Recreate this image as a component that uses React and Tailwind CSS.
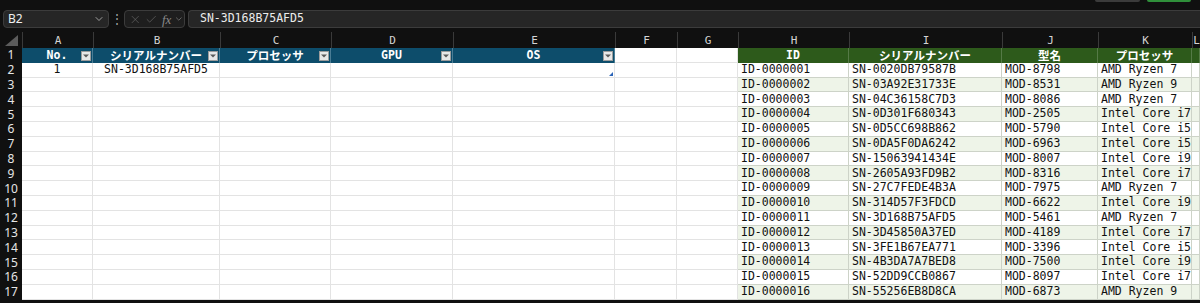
import React from 'react';
import { ChevronDown, X, Check } from 'lucide-react';

const rows = [
  ['SN-0020DB79587B', 'MOD-8798', 'AMD Ryzen 7'],
  ['SN-03A92E31733E', 'MOD-8531', 'AMD Ryzen 9'],
  ['SN-04C36158C7D3', 'MOD-8086', 'AMD Ryzen 7'],
  ['SN-0D301F680343', 'MOD-2505', 'Intel Core i7'],
  ['SN-0D5CC698B862', 'MOD-5790', 'Intel Core i5'],
  ['SN-0DA5F0DA6242', 'MOD-6963', 'Intel Core i5'],
  ['SN-15063941434E', 'MOD-8007', 'Intel Core i9'],
  ['SN-2605A93FD9B2', 'MOD-8316', 'Intel Core i7'],
  ['SN-27C7FEDE4B3A', 'MOD-7975', 'AMD Ryzen 7'],
  ['SN-314D57F3FDCD', 'MOD-6622', 'Intel Core i9'],
  ['SN-3D168B75AFD5', 'MOD-5461', 'AMD Ryzen 7'],
  ['SN-3D45850A37ED', 'MOD-4189', 'Intel Core i7'],
  ['SN-3FE1B67EA771', 'MOD-3396', 'Intel Core i5'],
  ['SN-4B3DA7A7BED8', 'MOD-7500', 'Intel Core i9'],
  ['SN-52DD9CCB0867', 'MOD-8097', 'Intel Core i7'],
  ['SN-55256EB8D8CA', 'MOD-6873', 'AMD Ryzen 9'],
];

const grid = 'grid grid-cols-[22px_71px_127px_111px_122px_162px_62px_61px_111px_153px_96px_94px_1fr]';
const mono = "font-['DejaVu_Sans_Mono','Noto_Sans_CJK_JP',monospace]";
const cjk = "font-['Noto_Sans_CJK_JP',sans-serif]";

function FilterBtn() {
  return (
    <span className="absolute right-[1px] top-[3px] w-[10px] h-[10px] bg-[#e8e8e8] border border-[#9c9c9c] flex items-center justify-center">
      <svg width="6" height="4" viewBox="0 0 6 4">
        <path d="M0 0.5H6L3 3.5Z" fill="#5a5a5a" />
      </svg>
    </span>
  );
}

function BlueHeader({ children, font }) {
  return (
    <div className={`relative bg-[#0d4d6b] border-r border-[#4a7d95] flex items-center justify-center whitespace-nowrap text-white font-bold text-[11.5px] leading-none ${font}`}>
      {children}
      <FilterBtn />
    </div>
  );
}

function GreenHeader({ children, font }) {
  return (
    <div className={`bg-[#2d5a1b] border-r border-[#557a47] flex items-center justify-center whitespace-nowrap overflow-hidden text-white font-bold text-[11.5px] leading-none ${font}`}>
      {children}
    </div>
  );
}

function Cell({ children, className = '' }) {
  return (
    <div className={`bg-white border-r border-b border-[#e3e3e3] flex items-center whitespace-nowrap text-[11.5px] leading-none text-[#111] ${mono} ${className}`}>
      {children}
    </div>
  );
}

function GreenCell({ children, band }) {
  return (
    <div className={`${band ? 'bg-[#eef4e8]' : 'bg-white'} border-r border-b border-[#cdd3c8] flex items-center pl-[3px] text-[11.5px] leading-none text-[#111] whitespace-nowrap ${mono}`}>
      {children}
    </div>
  );
}

function RowNum({ n }) {
  return (
    <div className="bg-[#101010] flex items-center justify-center text-[12px] leading-none text-[#e6e6e6] font-['Noto_Sans',sans-serif]">
      {n}
    </div>
  );
}

export default function App() {
  const letters = ['A', 'B', 'C', 'D', 'E', 'F', 'G', 'H', 'I', 'J', 'K', 'L'];

  return (
    <div className="w-[1200px] h-[303px] overflow-hidden bg-[#101010]">
      {/* formula bar */}
      <div className="h-[32px] flex flex-col">
        <div className="h-[10px] flex items-start">
          <div className="flex-1" />
          <div className="w-[45px] h-[2px] bg-[#3b3b3b] rounded-b-[2px]" />
          <div className="w-[44px] h-[2px] bg-[#2f8f3a] rounded-b-[2px] ml-[7px] mr-[9px]" />
        </div>
        <div className="h-[18px] flex items-stretch">
          <div className="ml-[3px] w-[106px] rounded-[4px] bg-[#262626] border border-[#3c3c3c] flex items-center pl-[4px] pr-[3px]">
            <span className="flex-1 text-[12px] leading-none text-[#f0f0f0] font-['Noto_Sans',sans-serif]">B2</span>
            <ChevronDown size={12} strokeWidth={1.6} color="#bdbdbd" />
          </div>
          <div className="w-[15px] flex items-center justify-center text-[#a8a8a8] text-[12px] leading-none">⋮</div>
          <div className="w-[61px] rounded-[4px] bg-[#1e1e1e] border border-[#3c3c3c] flex items-center pl-[4px] gap-[3px]">
            <X size={13} strokeWidth={1.2} color="#6f6f6f" />
            <Check size={13} strokeWidth={1.2} color="#6f6f6f" />
            <span className="ml-[2px] text-[13px] leading-none italic text-[#8a8a8a] font-['Liberation_Serif',serif]">fx</span>
            <ChevronDown size={10} strokeWidth={1.6} color="#8a8a8a" />
          </div>
          <div className={`ml-[3px] flex-1 rounded-l-[4px] bg-[#262626] border border-r-0 border-[#3c3c3c] flex items-center pl-[11px] text-[11.5px] leading-none text-[#ececec] ${mono}`}>
            SN-3D168B75AFD5
          </div>
        </div>
        <div className="flex-1" />
      </div>

      {/* column letters */}
      <div className={`${grid} h-[16px]`}>
        <div className="bg-[#101010] flex items-end justify-center pb-[2px]">
          <svg width="13" height="11" viewBox="0 0 13 11">
            <path d="M13 0V11H0Z" fill="#5c5c5c" />
          </svg>
        </div>
        {letters.map((l) => (
          <div key={l} className={`bg-[#101010] border-l border-[#3a3a3a] flex items-center justify-center text-[11px] leading-none text-[#d4d4d4] ${mono}`}>
            {l}
          </div>
        ))}
      </div>

      {/* row 1: headers */}
      <div className={`${grid} h-[14.8px]`}>
        <RowNum n={1} />
        <BlueHeader font={mono}>No.</BlueHeader>
        <BlueHeader font={cjk}>シリアルナンバー</BlueHeader>
        <BlueHeader font={cjk}>プロセッサ</BlueHeader>
        <BlueHeader font={mono}>GPU</BlueHeader>
        <BlueHeader font={mono}>OS</BlueHeader>
        <Cell />
        <Cell />
        <GreenHeader font={mono}>ID</GreenHeader>
        <GreenHeader font={cjk}>シリアルナンバー</GreenHeader>
        <GreenHeader font={cjk}>型名</GreenHeader>
        <GreenHeader font={cjk}>プロセッサ</GreenHeader>
        <GreenHeader font={cjk} />
      </div>

      {rows.map((r, i) => {
        const id = `ID-${String(i + 1).padStart(7, '0')}`;
        const band = i % 2 === 1;
        const first = i === 0;
        return (
          <div key={id} className={`${grid} h-[14.8px]`}>
            <RowNum n={i + 2} />
            <Cell className="justify-center">{first ? '1' : ''}</Cell>
            <Cell className="justify-center">{first ? 'SN-3D168B75AFD5' : ''}</Cell>
            <Cell />
            <Cell />
            <Cell className="relative">
              {first && (
                <svg className="absolute right-[1px] bottom-[1px]" width="4" height="4" viewBox="0 0 4 4">
                  <path d="M4 0V4H0Z" fill="#2a64b8" />
                </svg>
              )}
            </Cell>
            <Cell />
            <Cell />
            <GreenCell band={band}>{id}</GreenCell>
            <GreenCell band={band}>{r[0]}</GreenCell>
            <GreenCell band={band}>{r[1]}</GreenCell>
            <GreenCell band={band}>{r[2]}</GreenCell>
            <GreenCell band={band} />
          </div>
        );
      })}
    </div>
  );
}
